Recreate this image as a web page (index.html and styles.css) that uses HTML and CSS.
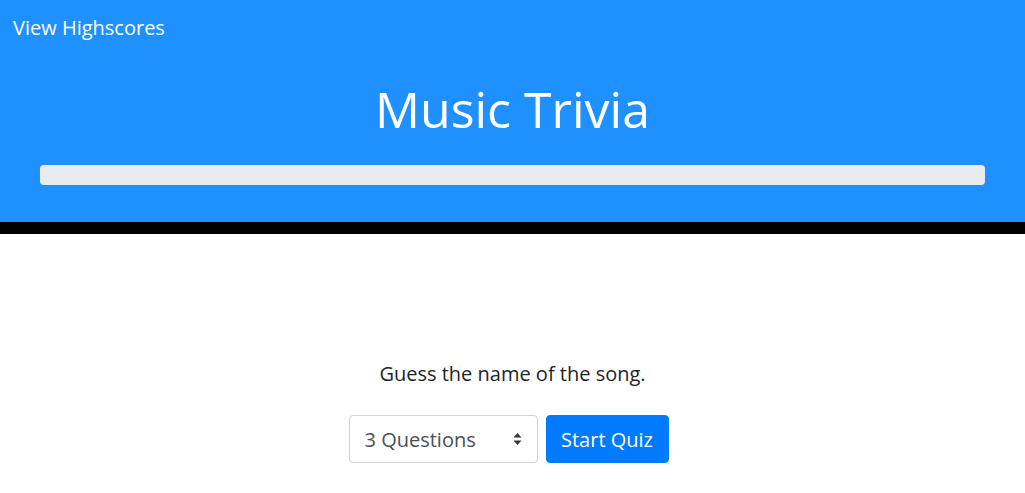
FILE: index.html
```html
<!DOCTYPE html>
<html>
<head>
<meta charset="utf-8">
<link rel="stylesheet" href="styles.css">
</head>
<body>
<header class="hero">
  <a class="scores-link" href="#">View Highscores</a>
  <h1 class="title">Music Trivia</h1>
  <div class="progress"></div>
</header>
<main class="intro">
  <p class="lead">Guess the name of the song.</p>
  <div class="controls">
    <div class="select-wrap">
      <span class="select-text">3 Questions</span>
      <svg class="select-arrow" width="9" height="14" viewBox="0 0 9 14"><path d="M4.5 1 L8.5 5.5 L0.5 5.5 Z M4.5 13 L8.5 8.5 L0.5 8.5 Z" fill="#343a40"/></svg>
    </div>
    <button class="btn-start">Start Quiz</button>
  </div>
</main>
</body>
</html>
```
FILE: styles.css
```css
* { box-sizing: border-box; }
html, body { margin: 0; padding: 0; }
body {
  font-family: "Open Sans", "Noto Sans", sans-serif;
  background: #fff;
  color: #212529;
}
.hero {
  background: #1e90ff;
  border-bottom: 12px solid #000;
  height: 234px;
  display: flex;
  flex-direction: column;
  padding: 14px 40px 0;
}
.scores-link {
  color: #fff;
  text-decoration: none;
  font-size: 20px;
  line-height: 28px;
  margin-left: -27px;
  align-self: flex-start;
}
.title {
  margin: 35px 0 0;
  text-align: center;
  color: #fff;
  font-weight: 400;
  font-size: 50px;
  line-height: 64px;
}
.progress {
  margin-top: 24px;
  height: 20px;
  background: #e9ecef;
  border-radius: 4px;
}
.intro {
  display: flex;
  flex-direction: column;
  align-items: center;
  padding-top: 125px;
}
.lead {
  margin: 0;
  font-size: 20px;
  line-height: 30px;
}
.controls {
  display: flex;
  gap: 8px;
  margin-top: 26px;
  padding-right: 8px;
}
.select-wrap {
  width: 189px;
  height: 48px;
  border: 1px solid #ced4da;
  border-radius: 4px;
  display: flex;
  align-items: center;
  justify-content: space-between;
  padding: 0 15px 0 15px;
  color: #495057;
  font-size: 20px;
}
.btn-start {
  height: 48px;
  width: 123px;
  background: #007bff;
  color: #fff;
  border: 1px solid #007bff;
  border-radius: 4px;
  font-family: inherit;
  font-size: 20px;
  padding: 0;
}
```
